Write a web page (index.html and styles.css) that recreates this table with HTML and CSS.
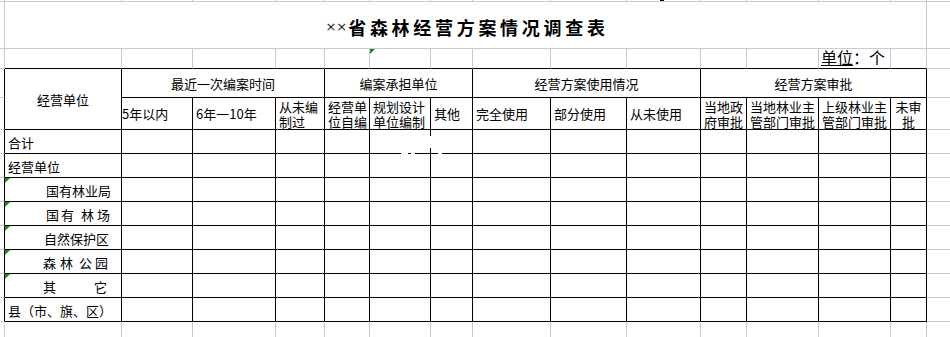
FILE: index.html
```html
<!DOCTYPE html>
<html lang="zh-CN">
<head>
<meta charset="utf-8">
<title>××省森林经营方案情况调查表</title>
<link rel="stylesheet" href="styles.css">
</head>
<body>
<div class="sheet">
  <!-- r0 -->
  <div class="c"></div><div class="c"></div><div class="c"></div><div class="c"></div>
  <div class="c"></div><div class="c"></div><div class="c"></div><div class="c"></div>
  <div class="c"></div><div class="c"></div><div class="c"></div><div class="c"></div>
  <div class="c"></div><div class="c"></div><div class="c"></div><div class="c nr"></div>
  <!-- r1 title -->
  <div class="c"></div>
  <div class="c s14 title"><span class="xx">××</span><span class="tt">省森林经营方案情况调查表</span></div>
  <div class="c nr"></div>
  <!-- r2 -->
  <div class="c"></div>
  <div class="c kb"></div><div class="c kb"></div><div class="c kb"></div><div class="c kb"></div>
  <div class="c kb"></div><div class="c kb tri"></div><div class="c kb"></div><div class="c kb"></div>
  <div class="c kb"></div><div class="c kb"></div><div class="c kb"></div><div class="c kb"></div>
  <div class="c kb unit"><span class="u">单位</span>：个</div><div class="c kb"></div>
  <div class="c nr"></div>
  <!-- r3 header 1 -->
  <div class="c k"></div>
  <div class="c t ctr r2 hd-unit"><span>经营单位</span></div>
  <div class="c t ctr s3"><span>最近一次编案时间</span></div>
  <div class="c t ctr s3"><span>编案承担单位</span></div>
  <div class="c t ctr s3"><span>经营方案使用情况</span></div>
  <div class="c t ctr s4"><span>经营方案审批</span></div>
  <div class="c nr"></div>
  <!-- r4 header 2 -->
  <div class="c k"></div>
  <div class="c t l0"><span>5年以内</span></div>
  <div class="c t l"><span>6年一10年</span></div>
  <div class="c t l w"><span>从未编制过</span></div>
  <div class="c t l w"><span>经营单位自编</span></div>
  <div class="c t l w"><span>规划设计单位编制</span></div>
  <div class="c t l"><span>其他</span></div>
  <div class="c t l"><span>完全使用</span></div>
  <div class="c t l"><span>部分使用</span></div>
  <div class="c t l"><span>从未使用</span></div>
  <div class="c t ctr w"><span>当地政府审批</span></div>
  <div class="c t ctr w"><span>当地林业主管部门审批</span></div>
  <div class="c t ctr w"><span>上级林业主管部门审批</span></div>
  <div class="c t ctr w"><span>未审批</span></div>
  <div class="c nr"></div>
  <!-- r5 合计 -->
  <div class="c k"></div>
  <div class="c t l body"><span>合计</span></div>
  <div class="c t"></div><div class="c t"></div><div class="c t"></div><div class="c t"></div><div class="c t"></div>
  <div class="c t"></div><div class="c t"></div><div class="c t"></div><div class="c t"></div><div class="c t"></div>
  <div class="c t"></div><div class="c t"></div><div class="c t"></div>
  <div class="c nr"></div>
  <!-- r6 经营单位 -->
  <div class="c k"></div>
  <div class="c t l body"><span>经营单位</span></div>
  <div class="c t"></div><div class="c t"></div><div class="c t"></div><div class="c t"></div><div class="c t"></div>
  <div class="c t"></div><div class="c t"></div><div class="c t"></div><div class="c t"></div><div class="c t"></div>
  <div class="c t"></div><div class="c t"></div><div class="c t"></div>
  <div class="c nr"></div>
  <!-- r7 国有林业局 -->
  <div class="c k"></div>
  <div class="c t tri body i41"><span>国有林业局</span></div>
  <div class="c t"></div><div class="c t"></div><div class="c t"></div><div class="c t"></div><div class="c t"></div>
  <div class="c t"></div><div class="c t"></div><div class="c t"></div><div class="c t"></div><div class="c t"></div>
  <div class="c t"></div><div class="c t"></div><div class="c t"></div>
  <div class="c nr"></div>
  <!-- r8 国有 林 场 -->
  <div class="c k"></div>
  <div class="c t tri body i41"><span>国</span><span class="m2">有</span><span class="m7">林</span><span class="m3">场</span></div>
  <div class="c t"></div><div class="c t"></div><div class="c t"></div><div class="c t"></div><div class="c t"></div>
  <div class="c t"></div><div class="c t"></div><div class="c t"></div><div class="c t"></div><div class="c t"></div>
  <div class="c t"></div><div class="c t"></div><div class="c t"></div>
  <div class="c nr"></div>
  <!-- r9 自然保护区 -->
  <div class="c k"></div>
  <div class="c t tri body i39"><span>自然保护区</span></div>
  <div class="c t"></div><div class="c t"></div><div class="c t"></div><div class="c t"></div><div class="c t"></div>
  <div class="c t"></div><div class="c t"></div><div class="c t"></div><div class="c t"></div><div class="c t"></div>
  <div class="c t"></div><div class="c t"></div><div class="c t"></div>
  <div class="c nr"></div>
  <!-- r10 森林 公园 -->
  <div class="c k"></div>
  <div class="c t tri body i38"><span>森</span><span class="m4">林</span><span class="m6">公</span><span class="m3">园</span></div>
  <div class="c t"></div><div class="c t"></div><div class="c t"></div><div class="c t"></div><div class="c t"></div>
  <div class="c t"></div><div class="c t"></div><div class="c t"></div><div class="c t"></div><div class="c t"></div>
  <div class="c t"></div><div class="c t"></div><div class="c t"></div>
  <div class="c nr"></div>
  <!-- r11 其 它 -->
  <div class="c k"></div>
  <div class="c t tri body i38"><span>其</span><span class="m38">它</span></div>
  <div class="c t"></div><div class="c t"></div><div class="c t"></div><div class="c t"></div><div class="c t"></div>
  <div class="c t"></div><div class="c t"></div><div class="c t"></div><div class="c t"></div><div class="c t"></div>
  <div class="c t"></div><div class="c t"></div><div class="c t"></div>
  <div class="c nr"></div>
  <!-- r12 县 -->
  <div class="c k"></div>
  <div class="c t l body"><span>县（市、旗、区）</span></div>
  <div class="c t"></div><div class="c t"></div><div class="c t"></div><div class="c t"></div><div class="c t"></div>
  <div class="c t"></div><div class="c t"></div><div class="c t"></div><div class="c t"></div><div class="c t"></div>
  <div class="c t"></div><div class="c t"></div><div class="c t"></div>
  <div class="c nr"></div>
  <!-- r13 -->
  <div class="c nb"></div><div class="c nb"></div><div class="c nb"></div><div class="c nb"></div>
  <div class="c nb"></div><div class="c nb"></div><div class="c nb"></div><div class="c nb"></div>
  <div class="c nb"></div><div class="c nb"></div><div class="c nb"></div><div class="c nb"></div>
  <div class="c nb"></div><div class="c nb"></div><div class="c nb"></div><div class="c nr nb"></div>

  <!-- repaint artifacts lying over the grid -->
  <div class="ov mark"></div>
  <div class="ov gap gap-v"></div>
  <div class="ov gap gap-h1"></div>
  <div class="ov gap gap-h2"></div>
  <div class="ov gap gap-h3"></div>
</div>
</body>
</html>
```

FILE: styles.css
```css
html, body {
  margin: 0;
  padding: 0;
  background: #ffffff;
}

body {
  width: 950px;
  height: 337px;
  overflow: hidden;
  font-family: "Noto Sans CJK SC", "Noto Sans", sans-serif;
  font-size: 13px;
  color: #000000;
}

.sheet {
  --g: #c5cad8;
  position: relative;
  display: grid;
  grid-template-columns: 5px 117px 71px 83px 49px 45px 61px 42px 78px 76px 74px 46px 72px 72px 36px 23px;
  grid-template-rows: 2px 47px 20px 29px 32px repeat(8, 24px) 16px;
}

.c {
  box-sizing: border-box;
  border-right: 1px solid var(--g);
  border-bottom: 1px solid var(--g);
  display: flex;
  align-items: center;
  min-width: 0;
  position: relative;
  line-height: 15px;
  white-space: nowrap;
}

.nr { border-right: none; }
.nb { border-bottom: none; }
.k  { border-right-color: #000000; }
.kb { border-bottom-color: #000000; }
.t  { border-right-color: #000000; border-bottom-color: #000000; }

.s3  { grid-column: span 3; }
.s4  { grid-column: span 4; }
.s14 { grid-column: span 14; }
.r2  { grid-row: span 2; }

.ctr { justify-content: center; text-align: center; }
.l   { padding-left: 3px; }
.l0  { padding-left: 0; }
.w   { white-space: normal; }
.w > span { display: block; }
.l.w > span { text-align: left; }

.hd-unit > span { padding-top: 1px; }

.body { padding-top: 2px; }
.i41 { padding-left: 41px; }
.i39 { padding-left: 39px; }
.i38 { padding-left: 38px; }
.m2  { margin-left: 2px; }
.m3  { margin-left: 3px; }
.m4  { margin-left: 4px; }
.m6  { margin-left: 6px; }
.m7  { margin-left: 7px; }
.m38 { margin-left: 38px; }

/* title */
.title {
  justify-content: center;
  padding-top: 3px;
  padding-left: 3px;
}
.title .xx {
  font-family: "DejaVu Sans", sans-serif;
  font-size: 13px;
  font-weight: normal;
  color: #222222;
  margin-right: 1px;
}
.title .tt {
  font-size: 18px;
  font-weight: 700;
  letter-spacing: 3.7px;
  line-height: 20px;
}

/* unit label */
.unit {
  font-size: 16px;
  line-height: 16px;
  padding-left: 2px;
  padding-bottom: 3px;
}
.unit .u {
  text-decoration: underline;
  text-underline-offset: 1px;
}

/* green corner markers */
.tri::before {
  content: "";
  position: absolute;
  left: 0;
  top: 0;
  width: 0;
  height: 0;
  border-top: 5px solid #1a8a1a;
  border-right: 5px solid transparent;
}

/* overlays */
.ov { position: absolute; }
.mark { left: 660px; top: 0; width: 4px; height: 1px; background: #000000; }
.gap { background: #ffffff; }
.gap-v  { left: 430px; top: 136px; width: 1px; height: 12px; }
.gap-h1 { left: 401px; top: 153px; width: 7px; height: 1px; }
.gap-h2 { left: 411px; top: 153px; width: 4px; height: 1px; }
.gap-h3 { left: 438px; top: 153px; width: 4px; height: 1px; }
```
